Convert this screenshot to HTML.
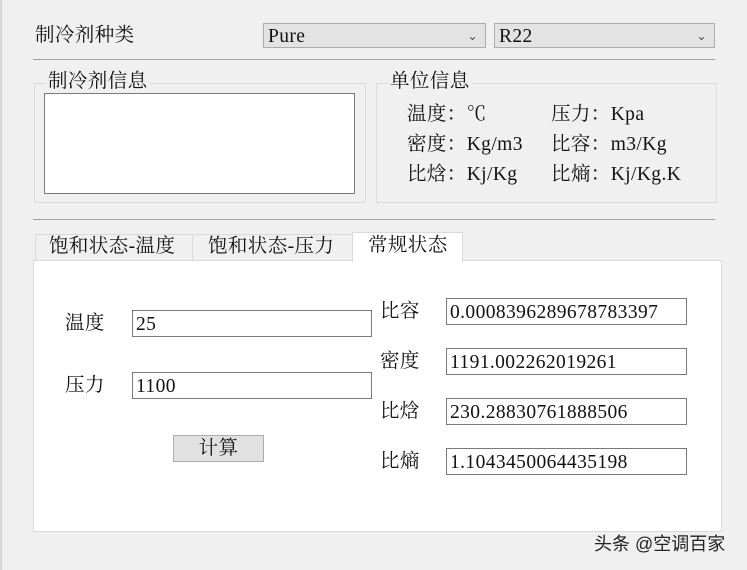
<!DOCTYPE html>
<html><head><meta charset="utf-8"><style>
body{margin:0;width:747px;height:570px;background:#f0f0f0;position:relative;overflow:hidden;font-family:"Liberation Serif","Noto Serif CJK SC",serif;color:#111;font-size:19.5px;letter-spacing:0.4px}
div{position:absolute;box-sizing:border-box}
.t{line-height:28px;white-space:nowrap}
.cb{background:#e3e3e3;border:1px solid #adadad;height:25px;padding-left:4px;line-height:25px}
.cb span{position:absolute;right:7px;top:0;font-size:12px;color:#444}
.hl{height:1px;background:#a0a0a0}
.gb{border:1px solid #dcdcdc}
.in{background:#fff;border:1px solid #7a7a7a;padding-left:3px;line-height:27px}
</style></head><body>
<div style="left:0;top:0;width:2px;height:570px;background:#d8d8d8"></div>
<div class="t" style="left:35px;top:22px">制冷剂种类</div>
<div class="cb" style="left:263px;top:23px;width:223px">Pure<span>⌄</span></div>
<div class="cb" style="left:494px;top:23px;width:221px">R22<span>⌄</span></div>
<div class="hl" style="left:33px;top:59px;width:682px"></div>
<div class="gb" style="left:34px;top:83px;width:332px;height:120px"></div>
<div class="t" style="left:46px;top:68px;background:#f0f0f0;padding:0 2px">制冷剂信息</div>
<div style="left:44px;top:93px;width:311px;height:101px;background:#fff;border:1px solid #7a7a7a"></div>
<div class="gb" style="left:376px;top:83px;width:341px;height:120px"></div>
<div class="t" style="left:388px;top:68px;background:#f0f0f0;padding:0 2px">单位信息</div>
<div class="t" style="left:407px;top:101px">温度：℃</div>
<div class="t" style="left:551px;top:101px">压力：Kpa</div>
<div class="t" style="left:407px;top:131px">密度：Kg/m3</div>
<div class="t" style="left:551px;top:131px">比容：m3/Kg</div>
<div class="t" style="left:407px;top:161px">比焓：Kj/Kg</div>
<div class="t" style="left:551px;top:161px">比熵：Kj/Kg.K</div>
<div class="hl" style="left:33px;top:219px;width:682px"></div>
<div style="left:35px;top:234px;width:158px;height:27px;border:1px solid #dadada;border-bottom:none"></div>
<div style="left:192px;top:234px;width:161px;height:27px;border:1px solid #dadada;border-bottom:none"></div>
<div class="t" style="left:49px;top:233px">饱和状态-温度</div>
<div class="t" style="left:208px;top:233px">饱和状态-压力</div>
<div style="left:33px;top:260px;width:689px;height:272px;background:#fff;border:1px solid #dadada"></div>
<div style="left:352px;top:232px;width:111px;height:30px;background:#fff;border:1px solid #dadada;border-bottom:none"></div>
<div class="t" style="left:368px;top:232px">常规状态</div>
<div class="t" style="left:65px;top:310px">温度</div>
<div class="in" style="left:132px;top:310px;width:240px;height:27px">25</div>
<div class="t" style="left:65px;top:372px">压力</div>
<div class="in" style="left:132px;top:372px;width:240px;height:27px">1100</div>
<div style="left:173px;top:435px;width:91px;height:27px;background:#e1e1e1;border:1px solid #adadad;text-align:center;line-height:25px">计算</div>
<div class="t" style="left:380px;top:298px">比容</div>
<div class="in" style="left:446px;top:298px;width:241px;height:27px">0.0008396289678783397</div>
<div class="t" style="left:380px;top:348px">密度</div>
<div class="in" style="left:446px;top:348px;width:241px;height:27px">1191.002262019261</div>
<div class="t" style="left:380px;top:398px">比焓</div>
<div class="in" style="left:446px;top:398px;width:241px;height:27px">230.28830761888506</div>
<div class="t" style="left:380px;top:448px">比熵</div>
<div class="in" style="left:446px;top:448px;width:241px;height:27px">1.1043450064435198</div>
<div class="t" style="left:594px;top:530px;font-family:'Liberation Sans','Noto Sans CJK SC',sans-serif;font-size:18px;color:#222;letter-spacing:0">头条 @空调百家</div>
</body></html>
